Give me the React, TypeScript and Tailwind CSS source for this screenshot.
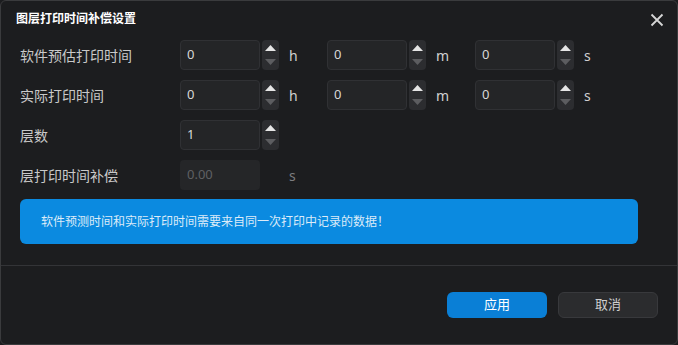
import React from 'react';

const font = { fontFamily: '"Noto Sans", "Noto Sans CJK SC", sans-serif' };

const Spinner: React.FC = () => (
  <div className="flex h-[30px] w-[17px] flex-col items-center justify-between rounded-[4px] bg-[#2c2d30] py-[5px]">
    <svg width="11" height="6" viewBox="0 0 11 6">
      <polygon points="5.5,0 11,6 0,6" fill="#e6e6e6" />
    </svg>
    <svg width="11" height="6" viewBox="0 0 11 6">
      <polygon points="0,0 11,0 5.5,6" fill="#5c5d60" />
    </svg>
  </div>
);

interface NumFieldProps {
  value: string;
  unit?: string;
  disabled?: boolean;
  wide?: boolean;
}

const NumField: React.FC<NumFieldProps> = ({ value, unit, disabled, wide }) => (
  <div className="flex items-center">
    <div
      className={
        disabled
          ? 'flex h-[30px] w-[80px] items-center rounded-[4px] bg-[#252628] pl-[7px] text-[13px] text-[#5f6063]'
          : 'flex h-[30px] w-[80px] items-center rounded-[4px] border border-[#303134] bg-[#242527] pl-[6px] text-[13px] text-[#d8d8d8]'
      }
    >
      {value}
    </div>
    {disabled ? <div className="w-[19px]" /> : <div className="ml-[2px]"><Spinner /></div>}
    {unit && (
      <span
        className={
          disabled
            ? 'ml-[10px] w-[38px] text-[14px] text-[#7d7e80]'
            : wide
              ? 'ml-[10px] w-[39px] text-[14px] text-[#d0d0d0]'
              : 'ml-[10px] w-[38px] text-[14px] text-[#d0d0d0]'
        }
      >
        {unit}
      </span>
    )}
  </div>
);

const Row: React.FC<{ label: string; children: React.ReactNode }> = ({ label, children }) => (
  <div className="flex h-[30px] items-center">
    <div className="w-[160px] text-[14px] text-[#c9c9c9]">{label}</div>
    <div className="flex items-center">{children}</div>
  </div>
);

export default function App() {
  return (
    <div className="h-[345px] w-[678px] bg-[#1c1d1f]" style={font}>
      <div className="flex h-[345px] w-[678px] flex-col rounded-[6px] border border-[#3a3b3d] bg-[#1c1d1f]">
        <div className="flex h-[36px] items-center justify-between pl-[15px] pr-[13px]">
          <span className="text-[12px] font-bold text-white">图层打印时间补偿设置</span>
          <svg width="14" height="14" viewBox="0 0 14 14" className="mt-[2px]">
            <path d="M1.5 1.5 L12.5 12.5 M12.5 1.5 L1.5 12.5" stroke="#d6d6d6" strokeWidth="1.8" />
          </svg>
        </div>
        <div className="flex flex-col gap-[10px] pl-[19px] pt-[3px]">
          <Row label="软件预估打印时间">
            <NumField value="0" unit="h" />
            <NumField value="0" unit="m" wide />
            <NumField value="0" unit="s" />
          </Row>
          <Row label="实际打印时间">
            <NumField value="0" unit="h" />
            <NumField value="0" unit="m" wide />
            <NumField value="0" unit="s" />
          </Row>
          <Row label="层数">
            <NumField value="1" />
          </Row>
          <Row label="层打印时间补偿">
            <NumField value="0.00" unit="s" disabled />
          </Row>
        </div>
        <div className="ml-[19px] mt-[9px] flex h-[45px] w-[618px] items-center rounded-[6px] bg-[#0b8ae0] pl-[21px] text-[12px] text-[#dcebf8]">
          软件预测时间和实际打印时间需要来自同一次打印中记录的数据！
        </div>
        <div className="mt-[21px] h-px bg-[#333437]" />
        <div className="flex flex-1 items-start justify-end gap-[11px] pr-[19px] pt-[26px]">
          <button className="flex h-[26px] w-[100px] items-center justify-center rounded-[6px] bg-[#0a7fd6] text-[13px] text-white">
            应用
          </button>
          <button className="flex h-[26px] w-[100px] items-center justify-center rounded-[6px] border border-[#38393c] bg-[#2b2c2e] text-[13px] text-[#cfcfcf]">
            取消
          </button>
        </div>
      </div>
    </div>
  );
}
